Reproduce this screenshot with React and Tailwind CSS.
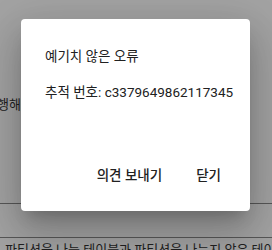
import React from 'react';

const font = { fontFamily: 'Roboto, "Noto Sans CJK KR", sans-serif' };

export default function App() {
    return (
        <div className="relative w-[272px] h-[250px] overflow-hidden bg-white text-[#333]" style={font}>
            {/* page underneath the dialog */}
            <div className="flex flex-col pt-[95px]">
                <p className="-ml-[15px] text-[13px] leading-5 whitespace-nowrap">수행해야 합니다.</p>
                <div className="h-[89px] border-b border-[#888]"></div>
                <div className="h-[34px] border-b border-[#888]"></div>
                <p className="pl-[5px] pt-[2px] text-[13px] leading-5 whitespace-nowrap">파티션을 나눈 테이블과 파티션을 나누지 않은 테이블 대</p>
            </div>

            {/* backdrop */}
            <div className="absolute inset-0 bg-black/[0.36]"></div>

            {/* dialog */}
            <div className="absolute left-[21px] top-[19px] w-[229px] h-[192px] flex flex-col bg-white rounded-[4px] shadow-[0_11px_15px_-7px_rgba(0,0,0,0.2),0_24px_38px_3px_rgba(0,0,0,0.14),0_9px_46px_8px_rgba(0,0,0,0.12)]">
                <div className="flex flex-col gap-4 px-6 pt-[27px] text-[13.5px] leading-5 text-[#212121] whitespace-nowrap">
                    <p>예기치 않은 오류</p>
                    <p>추적 번호: c3379649862117345</p>
                </div>
                <div className="mt-auto flex justify-end gap-[2px] pr-[13px] pb-[18px]">
                    <button className="h-9 px-4 text-[13.5px] font-medium text-[#212121]">의견 보내기</button>
                    <button className="h-9 px-4 text-[13.5px] font-medium text-[#212121]">닫기</button>
                </div>
            </div>
        </div>
    );
}
